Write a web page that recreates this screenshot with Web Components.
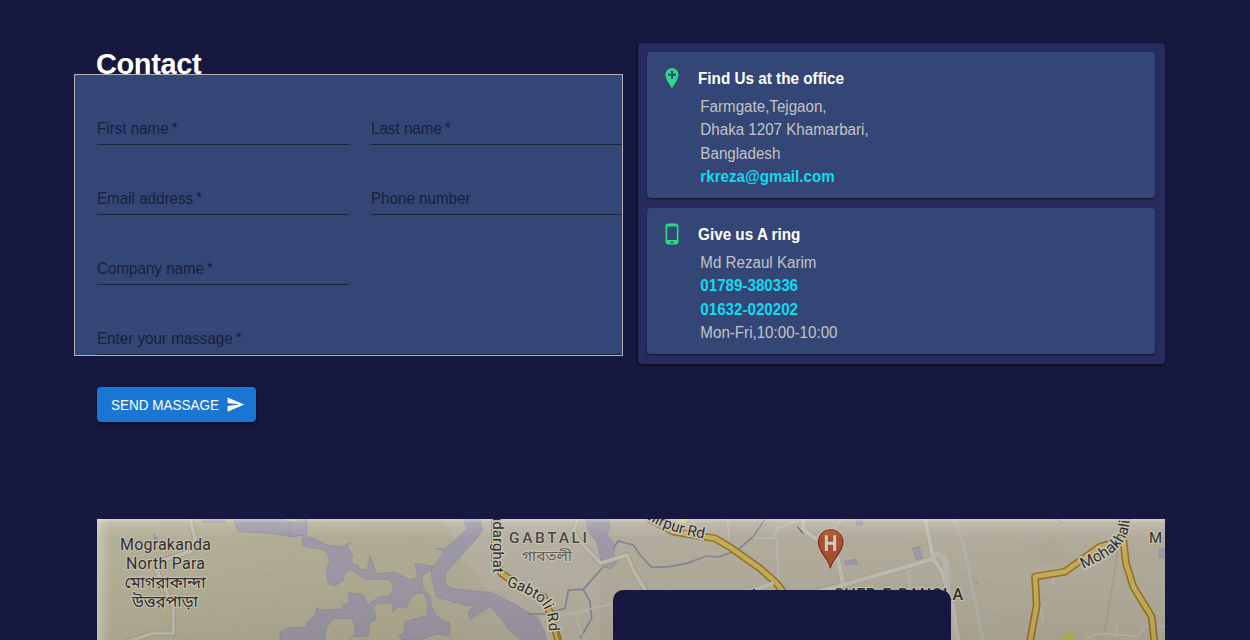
<!DOCTYPE html>
<html lang="en">
<head>
<meta charset="utf-8">
<title>Contact</title>
<style>
html,body{margin:0;height:640px;overflow:hidden;background:#17183f}
body{font-family:"Liberation Sans",Arial,sans-serif;font-size:16px}
</style>
</head>
<body>
<contact-page></contact-page>
<script>
const define = (name, html) => customElements.define(name, class extends HTMLElement {
  constructor(){
    super();
    const t = document.createElement('template');
    t.innerHTML = html;
    this.attachShadow({mode:'open'}).append(t.content.cloneNode(true));
  }
});

define('text-field', `<style>
:host{display:block;box-sizing:border-box;height:70px;padding-top:45px;border-bottom:1px solid #18233d;color:#17203d;font-size:16px;line-height:18px;white-space:nowrap}
span{display:block;transform:scaleX(.948);transform-origin:left}
</style><span><slot></slot></span>`);

define('contact-form', `<style>
:host{display:block;position:relative;box-sizing:border-box;width:549px;height:282px;margin-left:-23px;border:1px solid #b3b4ba;background:#344675;overflow:hidden}
form{display:grid;grid-template-columns:252px 252px;column-gap:22px;padding-left:22px}
.wide{grid-column:1/3}
</style><form>
<text-field>First name&#8201;*</text-field><text-field>Last name&#8201;*</text-field>
<text-field>Email address&#8201;*</text-field><text-field>Phone number</text-field>
<text-field>Company name&#8201;*</text-field><span></span>
<text-field class="wide">Enter your massage&#8201;*</text-field></form>`);

define('send-button', `<style>
:host{display:inline-flex;box-sizing:border-box;width:159px;height:35px;margin-top:31px;padding-left:14px;align-items:center;gap:8px;border-radius:4px;background:#1976d2;color:#fff;font-size:14px;white-space:nowrap;box-shadow:0 2px 3px #0008}
span{width:107px;transform:scaleX(.964);transform-origin:left}svg{width:19px;height:19px}
</style><span><slot></slot></span><svg viewBox="0 0 24 24" fill="#fff"><path d="M2.01 21 23 12 2.01 3 2 10l15 2-15 2z"/></svg>`);

define('info-card', `<style>
:host{display:flex;box-sizing:border-box;height:146px;padding:14px 16px 0 15px;border-radius:4px;background:#344675;box-shadow:0 1px 2px #0009}
.icon{width:20px;height:24px;margin-right:16px}
h2{margin:0 0 0 -.3px;font-size:16px;line-height:25px;height:24px;color:#fff;transform:scaleX(.955);transform-origin:left}
.lines{padding:5px 0 0 2.500px;font-size:16px;line-height:23.4px;color:#c3c4c5}
.lines{transform:scaleX(.946);transform-origin:left}
</style><div class="icon"><slot name="icon"></slot></div><div><h2><slot name="title"></slot></h2><div class="lines"><slot></slot></div></div>`);

define('info-panel', `<style>
:host{display:flex;flex-direction:column;gap:10px;box-sizing:border-box;width:527px;height:321px;padding:9px 10px 0 9px;border-radius:4px;background:#282b5f;box-shadow:0 1px 3px #000a}
svg{display:block;width:24px;height:24px;margin-left:-2px}
p{margin:0;white-space:nowrap}b{color:#10dbf3}
</style>
<info-card><svg slot="icon" viewBox="0 0 24 24" fill="#2bd88b"><path d="M12 2C8.300 2 5.500 5 5.500 8.700c0 5 6.500 13.300 6.500 13.300s6.500-8.300 6.500-13.300C18.500 5 15.700 2 12 2zm4 7.700h-3v3h-2v-3H8v-2h3v-3h2v3h3z"/></svg>
<span slot="title">Find Us at the office</span>
<p>Farmgate,Tejgaon,</p><p>Dhaka 1207 Khamarbari,</p><p>Bangladesh</p><p><b>rkreza@gmail.com</b></p></info-card>
<info-card><svg slot="icon" viewBox="0 0 24 24" fill="#2bd88b"><path d="M16 1.500H8c-1.400 0-2.500 1.100-2.500 2.500v16c0 1.400 1.100 2.500 2.500 2.500h8c1.400 0 2.500-1.100 2.500-2.500V4c0-1.400-1.100-2.500-2.500-2.500zM14 20.700h-4v-1h4zm2.800-2.700H7.200V4.500h9.600z"/></svg>
<span slot="title">Give us A ring</span>
<p>Md Rezaul Karim</p><p><b>01789-380336</b></p><p><b>01632-020202</b></p><p>Mon-Fri,10:00-10:00</p></info-card>`);

define('city-map', `<style>
:host{display:block;position:relative;height:121px;overflow:hidden;background:#aca694}
svg{display:block;width:1068px;height:121px}
.overlay{position:absolute;left:516px;top:71px;width:338px;height:60px;border-radius:10px;background:#17183f}
.w{fill:#9893a1;stroke:#807f95;stroke-width:1.5}
.stream{fill:none;stroke:#817d91;stroke-width:5}
.edge{fill:none;stroke:#a59571;stroke-width:16;stroke-linejoin:round}
.road{fill:none;stroke:#b9b8ae;stroke-width:11;stroke-linejoin:round}
.minor{fill:none;stroke:#b8b6ae;stroke-width:4}
.oe{fill:none;stroke:#94651f;stroke-width:23;stroke-linejoin:round}
.or{fill:none;stroke:#bfa94e;stroke-width:14;stroke-linejoin:round}
text{font-family:Roboto,"Noto Sans Bengali",sans-serif;fill:#302e2c;stroke:#c8c4b5;stroke-width:2px;paint-order:stroke;stroke-linejoin:round}
.rd{stroke-width:3px}
</style>
<svg viewBox="97 519 1068 121">
<defs>
<linearGradient id="land"><stop offset="0" stop-color="#b0ab92"/><stop offset=".3" stop-color="#aba68c"/><stop offset=".38" stop-color="#ada797"/><stop offset="1" stop-color="#aca695"/></linearGradient>
<linearGradient id="shade" x2="0" y2="1"><stop offset="0" stop-color="#fffbe8" stop-opacity=".5"/><stop offset=".035" stop-color="#fff" stop-opacity=".2"/><stop offset=".16" stop-color="#fff" stop-opacity=".05"/><stop offset="1" stop-color="#554" stop-opacity=".08"/></linearGradient>
<linearGradient id="side"><stop offset="0" stop-color="#fff" stop-opacity=".28"/><stop offset="1" stop-color="#fff" stop-opacity="0"/></linearGradient>
<path id="gab" d="M506 586 Q524 591 538 601 Q550 609 549 640"/>
<path id="mir" d="M643 517 Q671 535 720 541"/>
<path id="moh" d="M1083 569 Q1110 557 1121 545 Q1130 534 1130 516 V490"/>
</defs>
<rect x="97" y="519" width="1068" height="121" fill="url(#land)"/>
<path d="M442 519H600V640H540L500 590 487 590 463 558z" fill="#b5afa2" opacity=".5"/>
<g fill="none" stroke="#a39e87" opacity=".4"><path d="M103 540q30 16 48 55t40 45M210 610q10-35 55-45t60-40M200 625q30-50 75-50M230 632q20-30 55-28M640 600q40-30 90-20M860 535l120 18M960 575l90 25M975 610l60 15M990 535l90 25"/></g>
<g transform="translate(90 510) scale(.3333)">
<path class="edge" d="M300 25L315 85 300 125 205 155 200 180 250 290V370H190L110 395"/><path class="road" d="M300 25L315 85 300 125 205 155 200 180 250 290V370H190L110 395"/>
<path class="w" d="M190 70l4 28 15-5zM337 27h68v10h-68zM430 27L445 65 540 70 610 80 645 75 650 27 620 38 580 34 580 27z"/>
</g>
<g transform="translate(290 510) scale(.3333)">
<path class="w" d="M0 38L25 35 28 27H50V80L75 85 110 105 155 110 182 97 172 110 188 135 185 160 205 165 208 178 232 180 240 132 257 190 315 187 362 210 383 200 375 160 435 170 425 182 405 190 397 205V230L420 260 425 290 440 320 480 340 478 378 440 372 390 390H335L328 375 340 370 345 335 412 318V275L400 250 380 250 362 265 350 292 325 290 308 308V280H265L245 300 257 307V330L240 335 235 378 190 380 175 392 195 375V345L185 325H130L108 355 105 392H-30L-30 365-15 360 0 353 50 350 52 335 75 318 80 293 95 300 155 298 158 285 178 280 175 248 222 255 232 285 265 262 298 258 312 230 295 208H225L183 180 165 190 160 210 135 228 115 222 108 185 120 150 105 120 37 108V75L0 80z"/>
<path class="w" d="M520 27L530 58 468 115H435L465 125 425 175V200L440 262 535 288 555 285 535 305 540 328 600 290 635 328 655 360 695 392H770L765 370 745 325 670 280 600 247 575 245 480 235 465 215 467 190 560 85 578 60 570 27z"/>
</g>
<g transform="translate(470 510) scale(.3333)">
<path class="w" d="M345 27H415L420 50 412 75 435 105 432 135 440 160 420 177 400 172 395 160 380 95 355 65z"/>
<path class="stream" d="M175 312H225L285 295 295 240 340 238 398 172M340 238L360 275 365 325 330 385M430 115L445 93 490 105 510 135 545 172 600 170 650 160 710 138 745 141 800 122 850 80 885 27"/>
<path class="minor" d="M430 280L285 315 225 330M320 305L325 350 345 390M773 27L777 92M850 85H915L920 55 975 35M920 85L926 210"/>
<path class="edge" d="M325 27L310 60 325 90 392 160 470 135 490 180 535 255"/><path class="road" d="M325 27L310 60 325 90 392 160 470 135 490 180 535 255"/>
<path class="oe" d="M75 25V150L95 190 150 230 220 260 245 320 265 392M535 25L610 65 690 78 735 85 785 115 870 175 920 220 950 260"/><path class="or" d="M75 25V150L95 190 150 230 220 260 245 320 265 392M535 25L610 65 690 78 735 85 785 115 870 175 920 220 950 260"/>
<path d="M257 330L268 392" stroke="#94651f" stroke-width="4"/><path d="M625 27h30l-8 14h-20z" fill="#c5bf4f"/><path class="road" d="M840 245L910 220"/>
</g>
<g transform="translate(790 510) scale(.3333)">
<g class="edge"><path d="M40 25V60L140 130 160 225M80 245L160 225 435 145M405 25L430 145 455 185 490 290 505 395"/></g>
<path class="road" style="stroke-width:13" d="M40 25V60L140 130 160 225M80 245L160 225 435 145M405 25L430 145 455 185 490 290 505 395"/>
<path d="M430 130L460 140 468 160 472 225 490 395" fill="none" stroke="#b3b1a8" stroke-width="16"/>
<path class="minor" d="M355 180L360 240M130 55L160 27"/><path d="M490 27L520 100 580 395" fill="none" stroke="#b1aea3" stroke-width="9"/>
<path class="w" d="M368 115L388 110 397 145 377 148zM163 155L197 147 203 163 165 165zM197 28h18l3 15-18 3z"/>
<path d="M22 50L40 70" stroke="#555263" stroke-width="4"/>
<path d="M121 175C117 147 85 127 85 97a37 38 0 0 1 74 0c0 30-33 50-38 78z" fill="#a34723" stroke="#c4bfae" stroke-width="8"/>
<path d="M121 175C117 147 85 127 85 97a37 38 0 0 1 74 0c0 30-33 50-38 78z" fill="#a34723" stroke="#7a261b" stroke-width="4"/>
<path d="M109 76V123M134 76V123M109 100H134" fill="none" stroke="#cfcbbf" stroke-width="9"/>
</g>
<g transform="translate(970 510) scale(.3333)">
<path d="M190 120l40-35 50 10 5 50-40 20-50-5z" fill="#aba08a" opacity=".5"/>
<path class="minor" d="M345 385Q390 365 420 372L505 380 525 347 630 352M250 190V225M210 290L220 335M440 350V380"/><path d="M445 110L405 365" stroke="#99866a" stroke-width="2"/>
<path class="oe" d="M470 25L460 90 390 110 285 185 195 200 200 285 180 395M460 90L468 160 490 230 545 320 553 395"/><path class="or" d="M470 25L460 90 390 110 285 185 195 200 200 285 180 395M460 90L468 160 490 230 545 320 553 395"/>
<path d="M272 380L310 360V395H280z" fill="#aeb04f"/><path class="w" d="M567 117h22v27h-22zM255 28l12-2 10 12z"/><path d="M15 215l14 10" stroke="#a7905c" stroke-width="4"/>
</g>
<rect x="97" y="519" width="1068" height="121" fill="url(#shade)"/><rect x="97" y="519" width="14" height="121" fill="url(#side)"/>
<g font-size="16" text-anchor="middle"><text x="165.500" y="549.500" textLength="91">Mograkanda</text><text x="165.500" y="569" textLength="79">North Para</text><text x="165" y="588" textLength="81" lengthAdjust="spacingAndGlyphs">মোগরাকান্দা</text><text x="165" y="607" textLength="66" lengthAdjust="spacingAndGlyphs">উত্তরপাড়া</text></g>
<text x="509" y="543" font-size="15.500" font-weight="500" textLength="78" style="fill:#4c4743">GABTALI</text>
<text x="522" y="561" font-size="15" textLength="50" lengthAdjust="spacingAndGlyphs" style="fill:#665c56">গাবতলী</text>
<text class="rd" transform="translate(493 513) rotate(90)" font-size="15" textLength="60">ndarghat</text>
<text class="rd" font-size="15"><textPath href="#gab">Gabtoli Rd</textPath></text>
<text class="rd" font-size="15"><textPath href="#mir">Mirpur Rd</textPath></text>
<text class="rd" font-size="15.500"><textPath href="#moh">Mohakhali</textPath></text>
<text x="834" y="600" font-size="16" font-weight="500" textLength="129">SHER-E-BANGLA</text><text x="1149" y="543" font-size="15">M</text>
<text transform="translate(747 600) rotate(-15)" font-size="13">M</text>
</svg><div class="overlay"></div>`);

define('contact-page', `<style>
:host{display:block;box-sizing:border-box;width:1250px;height:640px;padding:43px 85px 0 97px;overflow:hidden}
.top{display:flex;justify-content:space-between;height:476px}
.left{width:526px}
h1{margin:0 0 0 -1px;height:31px;padding-top:4px;box-sizing:border-box;font-size:29px;line-height:34px;letter-spacing:-.4px;color:#fff}
</style><div class="top"><div class="left"><h1>Contact</h1><contact-form></contact-form><send-button>SEND MASSAGE</send-button></div><info-panel></info-panel></div><city-map></city-map>`);
</script>
</body>
</html>
